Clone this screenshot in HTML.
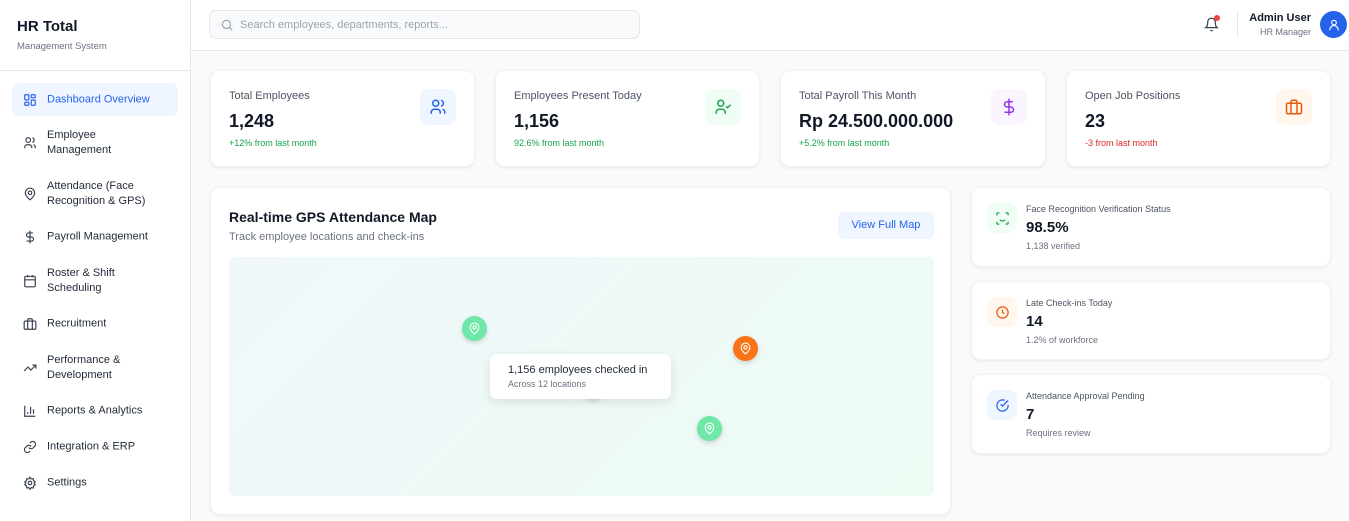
<!DOCTYPE html>
<html><head><meta charset="utf-8"><style>
*{box-sizing:border-box;margin:0;padding:0}
body{width:1349px;height:521px;overflow:hidden;background:#f8fafc;font-family:"Liberation Sans",sans-serif;color:#111827;position:relative}
.sb{position:absolute;left:0;top:0;width:191px;height:521px;background:#fff;border-right:1px solid #e5e7eb}
.logo{height:71px;border-bottom:1px solid #e5e7eb;padding:18px 0 0 17px}
.logo b{font-size:15px;display:block}
.logo span{font-size:9.5px;color:#6b7280;display:block;margin-top:6px}
.nav{position:absolute;left:12px;width:166px;font-size:11px;color:#1f2937;line-height:15px}
.nav svg{position:absolute;left:11px;top:50%;margin-top:-7px}
.nav div{position:absolute;left:35px;top:50%;transform:translateY(-50%);white-space:nowrap}
.act{background:#eff6ff;border-radius:7px;color:#2563eb}
.hd{position:absolute;left:191px;top:0;right:0;height:51px;background:#fff;border-bottom:1px solid #e5e7eb}
.search{position:absolute;left:18px;top:10px;width:431px;height:29px;border:1px solid #e5e7eb;border-radius:7px;background:#f9fafb;font-size:11px;color:#9ca3af;padding:8px 0 0 30px}
.card{position:absolute;background:#fff;border-radius:10px;box-shadow:0 1px 3px rgba(0,0,0,.08);border:1px solid #f1f3f5}
.lbl{position:absolute;left:18px;top:19px;font-size:11px;color:#4b5563}
.val{position:absolute;left:18px;top:40px;font-size:18px;font-weight:bold}
.sub{position:absolute;left:18px;top:67px;font-size:9px}
.ic{position:absolute;right:18px;top:18px;width:36px;height:36px;border-radius:8px;display:flex;align-items:center;justify-content:center}
.sm .ic{left:15px;top:15px;width:30px;height:30px}
.sm .l{position:absolute;left:54px;top:16px;font-size:9px;color:#4b5563}
.sm .v{position:absolute;left:54px;top:31px;font-size:15px;font-weight:bold}
.sm .s{position:absolute;left:54px;top:53px;font-size:9px;color:#6b7280}
.pin{position:absolute;width:25px;height:25px;border-radius:50%;display:flex;align-items:center;justify-content:center;box-shadow:0 2px 5px rgba(0,0,0,.15)}
</style></head><body>
<div class="sb">
<div class="logo"><b>HR Total</b><span>Management System</span></div>
<div class="nav act" style="top:83px;height:33px"><svg width="14" height="14" viewBox="0 0 24 24" fill="none" stroke="#2563eb" stroke-width="2"><rect x="3" y="3" width="7" height="9" rx="1"/><rect x="14" y="3" width="7" height="5" rx="1"/><rect x="14" y="12" width="7" height="9" rx="1"/><rect x="3" y="16" width="7" height="5" rx="1"/></svg><div>Dashboard Overview</div></div>
<div class="nav" style="top:127px;height:32px"><svg width="14" height="14" viewBox="0 0 24 24" fill="none" stroke="#374151" stroke-width="2"><circle cx="9" cy="7" r="4"/><path d="M3 21v-2a4 4 0 014-4h4a4 4 0 014 4v2M16 3.1a4 4 0 010 7.8M21 21v-2a4 4 0 00-3-3.9"/></svg><div>Employee<br>Management</div></div>
<div class="nav" style="top:178px;height:32px"><svg width="14" height="14" viewBox="0 0 24 24" fill="none" stroke="#374151" stroke-width="2"><path d="M20 10c0 6-8 12-8 12s-8-6-8-12a8 8 0 0116 0z"/><circle cx="12" cy="10" r="3"/></svg><div>Attendance (Face<br>Recognition &amp; GPS)</div></div>
<div class="nav" style="top:229px;height:16px"><svg width="14" height="14" viewBox="0 0 24 24" fill="none" stroke="#374151" stroke-width="2"><path d="M12 1v22M17 5H9.5a3.5 3.5 0 000 7h5a3.5 3.5 0 010 7H6"/></svg><div>Payroll Management</div></div>
<div class="nav" style="top:265px;height:32px"><svg width="14" height="14" viewBox="0 0 24 24" fill="none" stroke="#374151" stroke-width="2"><rect x="3" y="4" width="18" height="18" rx="2"/><path d="M16 2v4M8 2v4M3 10h18"/></svg><div>Roster &amp; Shift<br>Scheduling</div></div>
<div class="nav" style="top:316px;height:16px"><svg width="14" height="14" viewBox="0 0 24 24" fill="none" stroke="#374151" stroke-width="2"><rect x="2" y="7" width="20" height="14" rx="2"/><path d="M16 21V5a2 2 0 00-2-2h-4a2 2 0 00-2 2v16"/></svg><div>Recruitment</div></div>
<div class="nav" style="top:352px;height:32px"><svg width="14" height="14" viewBox="0 0 24 24" fill="none" stroke="#374151" stroke-width="2"><path d="M22 7l-8.5 8.5-5-5L2 17M16 7h6v6"/></svg><div>Performance &amp;<br>Development</div></div>
<div class="nav" style="top:403px;height:16px"><svg width="14" height="14" viewBox="0 0 24 24" fill="none" stroke="#374151" stroke-width="2"><path d="M3 3v18h18M18 17V9M13 17V5M8 17v-3"/></svg><div>Reports &amp; Analytics</div></div>
<div class="nav" style="top:439px;height:16px"><svg width="14" height="14" viewBox="0 0 24 24" fill="none" stroke="#374151" stroke-width="2"><path d="M10 13a5 5 0 007.5.5l3-3a5 5 0 00-7-7l-1.7 1.7M14 11a5 5 0 00-7.5-.5l-3 3a5 5 0 007 7l1.7-1.7"/></svg><div>Integration &amp; ERP</div></div>
<div class="nav" style="top:475px;height:16px"><svg width="14" height="14" viewBox="0 0 24 24" fill="none" stroke="#374151" stroke-width="2"><circle cx="12" cy="12" r="3"/><path d="M12 2l2 3 3.5-.5.5 3.5 3 2-2 2.5 2 2.5-3 2-.5 3.5-3.5-.5-2 3-2-3-3.5.5-.5-3.5-3-2 2-2.5-2-2.5 3-2 .5-3.5 3.5.5z"/></svg><div>Settings</div></div>
</div>
<div class="hd">
<div class="search"><svg style="position:absolute;left:10px;top:7px" width="14" height="14" viewBox="0 0 24 24" fill="none" stroke="#9ca3af" stroke-width="2"><circle cx="11" cy="11" r="7"/><path d="M21 21l-4.5-4.5"/></svg>Search employees, departments, reports...</div>
<svg style="position:absolute;left:1013px;top:17px" width="15" height="15" viewBox="0 0 24 24" fill="none" stroke="#374151" stroke-width="2"><path d="M6 8a6 6 0 0112 0c0 7 3 9 3 9H3s3-2 3-9M10.3 21a1.9 1.9 0 003.4 0"/></svg>
<div style="position:absolute;left:1023px;top:15px;width:6px;height:6px;border-radius:50%;background:#ef4444"></div>
<div style="position:absolute;left:1046px;top:11px;width:1px;height:27px;background:#e5e7eb"></div>
<div style="position:absolute;right:38px;top:12px;font-size:11px;font-weight:bold;text-align:right">Admin User</div>
<div style="position:absolute;right:38px;top:27px;font-size:9px;color:#6b7280">HR Manager</div>
<div style="position:absolute;left:1129px;top:11px;width:27px;height:27px;border-radius:50%;background:#2563eb;display:flex;align-items:center;justify-content:center"><svg width="14" height="14" viewBox="0 0 24 24" fill="none" stroke="#fff" stroke-width="2"><circle cx="12" cy="8" r="4"/><path d="M5 21v-1a7 7 0 0114 0v1"/></svg></div>
</div>

<div class="card" style="left:210px;top:70px;width:265px;height:97px"><div class="lbl">Total Employees</div><div class="val">1,248</div><div class="sub" style="color:#16a34a">+12% from last month</div><div class="ic" style="background:#eff6ff"><svg width="18" height="18" viewBox="0 0 24 24" fill="none" stroke="#2563eb" stroke-width="2"><circle cx="9" cy="7" r="4"/><path d="M3 21v-2a4 4 0 014-4h4a4 4 0 014 4v2M16 3.1a4 4 0 010 7.8M21 21v-2a4 4 0 00-3-3.9"/></svg></div></div>
<div class="card" style="left:495px;top:70px;width:265px;height:97px"><div class="lbl">Employees Present Today</div><div class="val">1,156</div><div class="sub" style="color:#16a34a">92.6% from last month</div><div class="ic" style="background:#f0fdf4"><svg width="18" height="18" viewBox="0 0 24 24" fill="none" stroke="#16a34a" stroke-width="2"><circle cx="9" cy="7" r="4"/><path d="M3 21v-2a4 4 0 014-4h4a4 4 0 014 4v2M16 11l2 2 4-4"/></svg></div></div>
<div class="card" style="left:780px;top:70px;width:266px;height:97px"><div class="lbl">Total Payroll This Month</div><div class="val">Rp 24.500.000.000</div><div class="sub" style="color:#16a34a">+5.2% from last month</div><div class="ic" style="background:#faf5ff"><svg width="18" height="18" viewBox="0 0 24 24" fill="none" stroke="#9333ea" stroke-width="2"><path d="M12 1v22M17 5H9.5a3.5 3.5 0 000 7h5a3.5 3.5 0 010 7H6"/></svg></div></div>
<div class="card" style="left:1066px;top:70px;width:265px;height:97px"><div class="lbl">Open Job Positions</div><div class="val">23</div><div class="sub" style="color:#dc2626">-3 from last month</div><div class="ic" style="background:#fff7ed"><svg width="18" height="18" viewBox="0 0 24 24" fill="none" stroke="#ea580c" stroke-width="2"><rect x="2" y="7" width="20" height="14" rx="2"/><path d="M16 21V5a2 2 0 00-2-2h-4a2 2 0 00-2 2v16"/></svg></div></div>

<div class="card" style="left:210px;top:187px;width:741px;height:328px">
<div style="position:absolute;left:18px;top:21px;font-size:14px;font-weight:bold">Real-time GPS Attendance Map</div>
<div style="position:absolute;left:18px;top:43px;font-size:11px;color:#6b7280">Track employee locations and check-ins</div>
<div style="position:absolute;left:627px;top:24px;width:96px;height:27px;border-radius:6px;background:#eff6ff;color:#2563eb;font-size:11px;text-align:center;line-height:27px">View Full Map</div>
<div style="position:absolute;left:18px;top:69px;width:705px;height:239px;border-radius:6px;background:linear-gradient(135deg,#eff7fb,#eefbf3)"></div>
</div>
<div class="pin" style="left:581px;top:374px;background:#6ee7a7"></div>
<div class="pin" style="left:462px;top:316px;background:#6ee7a7"><svg width="13" height="13" viewBox="0 0 24 24" fill="none" stroke="#fff" stroke-width="2"><path d="M20 10c0 6-8 12-8 12s-8-6-8-12a8 8 0 0116 0z"/><circle cx="12" cy="10" r="3"/></svg></div>
<div class="pin" style="left:733px;top:336px;background:#f97316"><svg width="13" height="13" viewBox="0 0 24 24" fill="none" stroke="#fff" stroke-width="2"><path d="M20 10c0 6-8 12-8 12s-8-6-8-12a8 8 0 0116 0z"/><circle cx="12" cy="10" r="3"/></svg></div>
<div class="pin" style="left:697px;top:416px;background:#6ee7a7"><svg width="13" height="13" viewBox="0 0 24 24" fill="none" stroke="#fff" stroke-width="2"><path d="M20 10c0 6-8 12-8 12s-8-6-8-12a8 8 0 0116 0z"/><circle cx="12" cy="10" r="3"/></svg></div>
<div style="position:absolute;left:490px;top:354px;width:181px;height:45px;background:#fff;border-radius:7px;box-shadow:0 3px 10px rgba(0,0,0,.1)">
<div style="position:absolute;left:18px;top:10px;font-size:11px;color:#1f2937">1,156 employees checked in</div>
<div style="position:absolute;left:18px;top:25px;font-size:9px;color:#6b7280">Across 12 locations</div></div>

<div class="card sm" style="left:971px;top:187px;width:360px;height:80px"><div class="ic" style="background:#f0fdf4"><svg width="15" height="15" viewBox="0 0 24 24" fill="none" stroke="#16a34a" stroke-width="2"><path d="M3 7V5a2 2 0 012-2h2M17 3h2a2 2 0 012 2v2M21 17v2a2 2 0 01-2 2h-2M7 21H5a2 2 0 01-2-2v-2M8 14s1.5 2 4 2 4-2 4-2M9 9h.01M15 9h.01"/></svg></div><div class="l">Face Recognition Verification Status</div><div class="v">98.5%</div><div class="s">1,138 verified</div></div>
<div class="card sm" style="left:971px;top:281px;width:360px;height:79px"><div class="ic" style="background:#fff7ed"><svg width="15" height="15" viewBox="0 0 24 24" fill="none" stroke="#ea580c" stroke-width="2"><circle cx="12" cy="12" r="9"/><path d="M12 7v5l3 2"/></svg></div><div class="l">Late Check-ins Today</div><div class="v">14</div><div class="s">1.2% of workforce</div></div>
<div class="card sm" style="left:971px;top:374px;width:360px;height:80px"><div class="ic" style="background:#eff6ff"><svg width="15" height="15" viewBox="0 0 24 24" fill="none" stroke="#2563eb" stroke-width="2"><path d="M21 11v1a9 9 0 11-5.3-8.2M21 4l-9 9-3-3"/></svg></div><div class="l">Attendance Approval Pending</div><div class="v">7</div><div class="s">Requires review</div></div>
</body></html>
